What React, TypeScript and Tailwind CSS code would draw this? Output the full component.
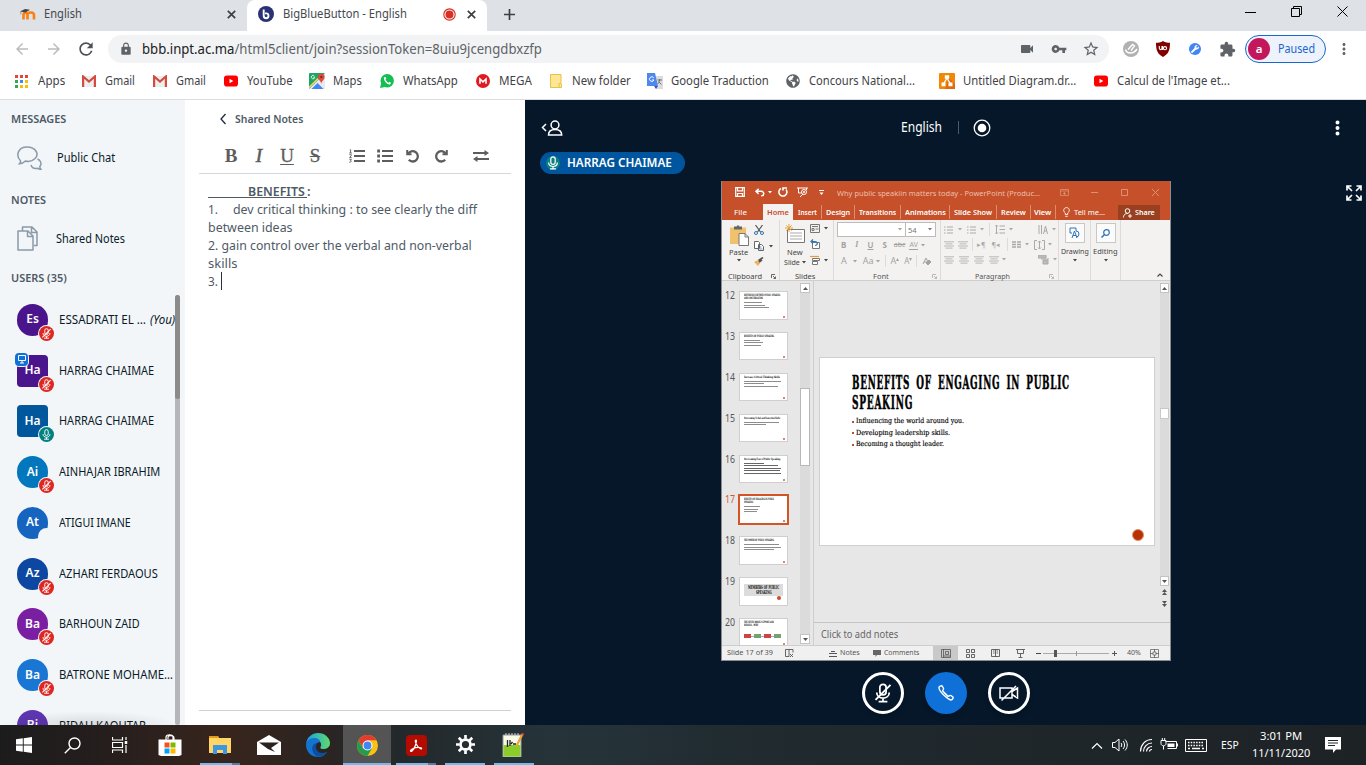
import React, { useLayoutEffect, useRef } from "react";
import clsx from "clsx";
import {
  MdArrowBack, MdArrowForward, MdRefresh, MdLock, MdVideocam, MdVpnKey, MdStarBorder,
  MdExtension, MdMoreVert,
} from "react-icons/md";
import { FaWrench, FaGlobeAmericas } from "react-icons/fa";

type Kids = { children?: React.ReactNode; className?: string };

/** Condenses or widens a single line of text so that it fills its box. */
function Fit({ children, className }: Kids) {
  const box = useRef<HTMLSpanElement>(null);
  const ink = useRef<HTMLSpanElement>(null);
  useLayoutEffect(() => {
    if (!box.current || !ink.current) return;
    const ratio = box.current.clientWidth / ink.current.offsetWidth;
    ink.current.style.transform = `scaleX(${ratio})`;
  });
  return (
    <span ref={box} className={clsx("block shrink-0 whitespace-pre", className)}>
      <span ref={ink} className="inline-block origin-left">{children}</span>
    </span>
  );
}

function Svg({ children, className, box = "0 0 16 16" }: Kids & { box?: string }) {
  return (
    <svg viewBox={box} className={clsx("shrink-0", className)} fill="none" stroke="currentColor">
      {children}
    </svg>
  );
}

/* ---------- Browser chrome ---------- */

const Cross = ({ className }: { className?: string }) => (
  <Svg className={clsx("h-[9px] w-[9px] text-[#3c4043]", className)} box="0 0 9 9"><path d="M.8.8l7.400 7.400M8.200.8L.8 8.200" strokeWidth="1.700" /></Svg>
);

function TabStrip() {
  return (
    <div className="flex h-[31px] bg-[#dee1e6] text-[12px] text-[#45494d]">
      <div className="flex h-[28px] w-[247px] items-center pl-[20px]">
        <Svg className="h-4 w-4" box="0 0 16 16">
          <path d="M3.500 13.500V9c0-3 4-3 4 0v4.500M7.500 13.500V9c0-3.400 6.500-3.400 6.500 0v4.500" stroke="#f98012" strokeWidth="2.6" />
          <path d="M0 5.500L5 3l5 .8-4.500 2.600z" fill="#444" stroke="none" />
          <path d="M.8 5.500v3" stroke="#777" strokeWidth=".7" />
        </Svg>
        <Fit className="ml-2 w-[38px]">English</Fit>
        <Cross className="ml-[145px]" />
      </div>
      <div className="flex h-[31px] w-[240px] items-center rounded-t-lg bg-white pb-[3px] pl-[11px]">
        <Svg className="h-4 w-4">
          <circle cx="8" cy="8" r="8" fill="#283274" stroke="none" />
          <path d="M5.700 3.500v6.300a2.400 2.400 0 1 0 2.400-2.400H7" stroke="#fff" strokeWidth="1.900" />
        </Svg>
        <Fit className="ml-[9px] w-[124px]">BigBlueButton - English</Fit>
        <Svg className="ml-[36px] h-[13px] w-[13px] text-[#d93025]">
          <circle cx="8" cy="8" r="7" strokeWidth="1.400" />
          <circle cx="8" cy="8" r="4.900" fill="currentColor" stroke="none" />
        </Svg>
        <Cross className="ml-[11px]" />
      </div>
      <Svg className="ml-[17px] mt-[9px] h-[11px] w-[11px] text-[#3c4043]" box="0 0 11 11"><path d="M5.500 0v11M0 5.500h11" strokeWidth="1.700" /></Svg>
      <div className="ml-auto mt-[5px] flex h-[13px] items-center gap-[35px] pr-[18px] text-black">
        <Svg className="h-[11px] w-[11px]" box="0 0 11 11"><path d="M0 6.500h11" /></Svg>
        <Svg className="h-[11px] w-[11px]" box="0 0 11 11"><path d="M.5 2.500h8v8h-8zM2.500 2.500v-2h8v8h-2" /></Svg>
        <Svg className="h-[11px] w-[11px]" box="0 0 11 11"><path d="M.5.500l10 10M10.500.5l-10 10" /></Svg>
      </div>
    </div>
  );
}

function AddressBar() {
  return (
    <div className="flex h-[36px] items-center bg-white text-[#5f6368]">
      <MdArrowBack className="ml-[13px] h-[18px] w-[18px] text-[#babcbe]" />
      <MdArrowForward className="ml-[14px] h-[18px] w-[18px] text-[#babcbe]" />
      <MdRefresh className="ml-[13px] h-5 w-5 text-[#4d5156]" />
      <div className="ml-[12px] flex h-7 w-[1001px] items-center rounded-full bg-[#f1f3f4]">
        <MdLock className="ml-[11px] h-[14px] w-[14px]" />
        <Fit className="ml-[9px] w-[400px] text-[13.500px]"><span className="text-[#202124]">bbb.inpt.ac.ma</span>/html5client/join?sessionToken=8uiu9jcengdbxzfp</Fit>
        <MdVideocam className="ml-auto h-4 w-4" />
        <MdVpnKey className="ml-4 h-4 w-4" />
        <MdStarBorder className="ml-[15px] mr-[9px] h-[18px] w-[18px]" />
      </div>
      <Svg className="ml-[14px] h-4 w-4">
        <circle cx="8" cy="8" r="8" fill="#b1b1b1" stroke="none" />
        <path d="M2.500 8.500c1 4.500 8 5 11.500-.5M5 8.500l4.500-5 2 1.500-3.500 4.500" stroke="#fff" strokeWidth="1.400" />
      </Svg>
      <Svg className="ml-4 h-4 w-4">
        <path d="M8 0c2.500 1.600 4.500 1.700 7 1.700C15 9 13.500 13 8 16 2.500 13 1 9 1 1.700 3.500 1.700 5.500 1.600 8 0z" fill="#800000" stroke="none" />
        <path d="M4.300 5v2.300c0 1.700 2.700 1.700 2.700 0V5M7.700 5v4" stroke="#fff" strokeWidth="1.100" />
        <circle cx="10" cy="7.200" r="1.600" stroke="#fff" strokeWidth="1.100" />
      </Svg>
      <span className="ml-[18px] flex h-3 w-3 items-center justify-center rounded-full bg-[#4285f4]">
        <FaWrench className="h-[8px] w-[8px] text-white" />
      </span>
      <MdExtension className="ml-[18px] h-[17px] w-[17px]" />
      <div className="ml-[9px] flex h-7 w-[81px] items-center rounded-full border border-[#1967d2] bg-[#edf2fb] pl-[2px]">
        <span className="flex h-[22px] w-[22px] items-center justify-center rounded-full bg-[#c2185b] text-[11.500px] font-semibold text-white">a</span>
        <Fit className="ml-[8px] w-[37px] text-[12.500px] text-[#1967d2]">Paused</Fit>
      </div>
      <MdMoreVert className="ml-[9px] h-[18px] w-[18px]" />
    </div>
  );
}

const YouTube = () => (
  <Svg className="h-[14px] w-[14px]" box="0 0 14 14">
    <rect x="0" y="1.500" width="14" height="11" rx="2.800" fill="#f00" stroke="none" />
    <path d="M5.500 4.700v4.600L9.300 7z" fill="#fff" stroke="none" />
  </Svg>
);
const Gmail = () => (
  <Svg className="h-[12px] w-[14px]" box="0 0 14 12">
    <path d="M0 1h14v11H0z" fill="#eceff1" stroke="none" />
    <path d="M1.100 12V1.500L7 6.500l5.900-5V12" stroke="#d54b3d" strokeWidth="2.200" />
  </Svg>
);

const bookmarks: { icon: React.ReactNode; label: string; at: string; w: string }[] = [
  {
    label: "Apps", at: "ml-[15px] gap-[10px]", w: "w-[27px]",
    icon: (
      <span className="grid grid-cols-3 gap-[2px]">
        {["bg-[#ea4335]", "bg-[#ea4335]", "bg-[#ea4335]", "bg-[#34a853]", "bg-[#4285f4]", "bg-[#fbbc05]", "bg-[#34a853]", "bg-[#fbbc05]", "bg-[#fbbc05]"].map((c, i) => (
          <i key={i} className={clsx("h-[3px] w-[3px]", c)} />
        ))}
      </span>
    ),
  },
  { label: "Gmail", at: "ml-[17px] gap-[9px]", w: "w-[30px]", icon: <Gmail /> },
  { label: "Gmail", at: "ml-[18px] gap-[9px]", w: "w-[30px]", icon: <Gmail /> },
  { label: "YouTube", at: "ml-[18px] gap-[9px]", w: "w-[46px]", icon: <YouTube /> },
  {
    label: "Maps", at: "ml-[16px] gap-[8px]", w: "w-[29px]",
    icon: (
      <Svg className="h-4 w-4">
        <rect width="16" height="16" rx="1" fill="#1fa463" stroke="none" />
        <path d="M0 16L16 0v16z" fill="#e8eaed" stroke="none" />
        <path d="M2.500 16L8.500 10l6 6z" fill="#4285f4" stroke="none" />
        <path d="M0 14.500L9 5.500" stroke="#fdd663" strokeWidth="1.400" />
        <path d="M5.500 3.300A1.700 1.700 0 1 0 5.700 4.300H4.200" stroke="#fff" strokeWidth=".8" />
        <path d="M12.300 11c0-3-3.300-4-3.300-7a3.300 3.300 0 0 1 6.600 0c0 3-3.300 4-3.300 7z" fill="#dd4b3e" stroke="none" />
        <circle cx="12.300" cy="4" r="1.100" fill="#7b1f17" stroke="none" />
      </Svg>
    ),
  },
  {
    label: "WhatsApp", at: "ml-[18px] gap-[9px]", w: "w-[55px]",
    icon: (
      <Svg className="h-[14px] w-[14px]" box="0 0 14 14">
        <circle cx="7.200" cy="6.800" r="6.700" fill="#12bf50" stroke="none" />
        <path d="M0 14l1.200-5L5 13z" fill="#12bf50" stroke="none" />
        <path d="M4.700 4c-.5 2.500 3 6 5.300 5.700" stroke="#fff" strokeWidth="1.500" />
        <path d="M4.500 3.200l1.100 1.800M8.800 8.700l1.700.9" stroke="#fff" strokeWidth="2" />
      </Svg>
    ),
  },
  {
    label: "MEGA", at: "ml-[18px] gap-[9px]", w: "w-[33px]",
    icon: (
      <Svg className="h-[14px] w-[14px]" box="0 0 14 14">
        <circle cx="7" cy="7" r="7" fill="#e01a22" stroke="none" />
        <path d="M4 9.800V5l3 2.800L10 5v4.800" stroke="#fff" strokeWidth="1.600" />
      </Svg>
    ),
  },
  {
    label: "New folder", at: "ml-[18px] gap-[10px]", w: "w-[59px]",
    icon: (
      <Svg className="h-[14px] w-[12px]" box="0 0 12 14">
        <path d="M.5.500h10.500v9l.5.500v3.500H.500z" fill="#ffe692" stroke="#e3c24f" />
        <path d="M9 13v-3.500h2" stroke="#e3c24f" />
      </Svg>
    ),
  },
  {
    label: "Google Traduction", at: "ml-[16px] gap-[8px]", w: "w-[98px]",
    icon: (
      <Svg className="h-4 w-4">
        <path d="M6 3h10v13H9z" fill="#dadce0" stroke="none" />
        <path d="M0 0h8l3 13H0z" fill="#4e88ef" stroke="none" />
        <path d="M7 13h4l-2 3z" fill="#3556b8" stroke="none" />
        <path d="M6.800 4.800A2.300 2.300 0 1 0 7 7H5" stroke="#fff" />
        <path d="M10.500 7h4.500M12.700 6v1c-.3 2-1 3-2 4M11.500 8.500l3 3" stroke="#6b7378" />
      </Svg>
    ),
  },
  { label: "Concours National...", at: "ml-[17px] gap-[9px]", w: "w-[106px]", icon: <FaGlobeAmericas className="h-[14px] w-[14px] text-[#5f6368]" /> },
  {
    label: "Untitled Diagram.dr...", at: "ml-[24px] gap-[8px]", w: "w-[113px]",
    icon: (
      <Svg className="h-4 w-4">
        <rect width="16" height="16" rx="1" fill="#f08705" stroke="none" />
        <path d="M10 5l6 6v5H6z" fill="#df6c0c" stroke="none" />
        <path d="M8 5L4.500 11M8 5l3.500 6" stroke="#fff" strokeWidth="1.300" />
        <path d="M5.800 2.300h4.400v3.400H5.800zM2.500 9.500h4v3.700h-4zM9.500 9.500h4v3.700h-4z" fill="#fff" stroke="none" />
      </Svg>
    ),
  },
  { label: "Calcul de l'Image et...", at: "ml-[18px] gap-[9px]", w: "w-[113px]", icon: <YouTube /> },
];

function Bookmarks() {
  return (
    <div className="flex h-[33px] items-center border-b border-[#dadce0] bg-white pb-[4px] text-[12px] text-[#3f4347]">
      {bookmarks.map((b, i) => (
        <div key={i} className={clsx("flex shrink-0 items-center", b.at)}>
          {b.icon}
          <Fit className={b.w}>{b.label}</Fit>
        </div>
      ))}
    </div>
  );
}

/* ---------- User list ---------- */

const Mic = ({ className, off }: { className?: string; off?: boolean }) => (
  <Svg className={className}>
    <rect x="5.500" y="1" width="5" height="8.500" rx="2.500" strokeWidth="1.400" />
    <path d="M3 7.500c0 6 10 6 10 0M8 12v2.800M4.500 14.800h7" strokeWidth="1.400" />
    {off && <path d="M2 13.500L14 1.500" strokeWidth="1.500" />}
  </Svg>
);

type Badge = "muted" | "live" | "none";
const users: { tag: string; name: string; w: string; bg: string; badge: Badge; square?: boolean; you?: boolean; presenter?: boolean }[] = [
  { tag: "Es", name: "ESSADRATI EL …", w: "w-[87px]", bg: "bg-[#4a148c]", badge: "muted", you: true },
  { tag: "Ha", name: "HARRAG CHAIMAE", w: "w-[95px]", bg: "bg-[#4a148c]", badge: "muted", square: true, presenter: true },
  { tag: "Ha", name: "HARRAG CHAIMAE", w: "w-[95px]", bg: "bg-[#01579b]", badge: "live", square: true },
  { tag: "Ai", name: "AINHAJAR IBRAHIM", w: "w-[101px]", bg: "bg-[#0277bd]", badge: "muted" },
  { tag: "At", name: "ATIGUI IMANE", w: "w-[72px]", bg: "bg-[#1565c0]", badge: "none" },
  { tag: "Az", name: "AZHARI FERDAOUS", w: "w-[99px]", bg: "bg-[#0d47a1]", badge: "muted" },
  { tag: "Ba", name: "BARHOUN ZAID", w: "w-[81px]", bg: "bg-[#7b1fa2]", badge: "muted" },
  { tag: "Ba", name: "BATRONE MOHAME…", w: "w-[114px]", bg: "bg-[#1976d2]", badge: "muted" },
  { tag: "Bi", name: "BIDAH KAOUTAR", w: "w-[87px]", bg: "bg-[#5e35b1]", badge: "muted" },
];

function Sidebar() {
  return (
    <aside className="relative flex w-[185px] shrink-0 flex-col overflow-hidden bg-[#f3f6f9] text-[12px] text-[#0b1a28]">
      <div className="flex h-[38px] items-center pl-[11px] text-[11.500px] font-semibold text-[#4e5a66]"><Fit className="w-[55px]">MESSAGES</Fit></div>
      <div className="flex h-[40px] items-center pl-[17px]">
        <Svg className="h-[25px] w-[25px] text-[#8b9aa8]" box="0 0 25 25">
          <path d="M3.300 14.500C-1.500 9.500 1 1 10 1s12.500 7.500 8 11.500c-3 3-7 3.300-9.500 2.500-1.500 1.500-3.500 2.500-6 2.700 1-1 1.300-2 .8-3.200z" strokeWidth="1.500" />
          <path d="M20.500 13c3.500 1.500 4.500 5 2.300 7.500 0 1 .5 2 1.200 2.700-1.300.2-2.500-.2-3.500-1-2.500.6-5.500-.2-6.500-3.200" strokeWidth="1.500" />
        </Svg>
        <Fit className="ml-[15px] w-[58px]">Public Chat</Fit>
      </div>
      <div className="mt-[2px] flex h-[40px] items-center pl-[11px] text-[11.500px] font-semibold text-[#4e5a66]"><Fit className="w-[35px]">NOTES</Fit></div>
      <div className="flex h-[37px] items-center pl-[17px]">
        <Svg className="h-[25px] w-[21px] text-[#8b9aa8]" box="0 0 21 25">
          <path d="M1 5h10l5 5v14H1zM10.500 5v5.500H16M5.500 4.500V1H15l5 5v13.500h-3M14.500 1v5.500H20" strokeWidth="1.500" strokeLinejoin="round" />
        </Svg>
        <Fit className="ml-[18px] w-[69px]">Shared Notes</Fit>
      </div>
      <div className="flex h-[37px] items-center pl-[11px] pt-[5px] text-[11.500px] font-semibold text-[#4e5a66]"><Fit className="w-[56px]">USERS (35)</Fit></div>
      <div className="flex flex-1 overflow-hidden">
        <div className="flex w-[175px] shrink-0 flex-col pt-[.5px]">
          {users.map((u, i) => (
            <div key={i} className="flex h-[50.750px] shrink-0 items-center pl-[17px]">
              <div className={clsx("relative flex h-8 w-[31px] shrink-0 items-center justify-center pb-px text-[12px] font-semibold text-white", u.bg, u.square ? "rounded-[4px]" : "rounded-full")}>
                {u.tag}
                <span className={clsx("absolute -bottom-[5px] -right-[6px] flex h-[15px] w-[15px] items-center justify-center rounded-full ring-1 ring-[#f3f6f9]",
                  u.badge === "muted" && "bg-[#df2721]", u.badge === "live" && "bg-[#008081]", u.badge === "none" && "bg-[#f3f6f9]")}>
                  {u.badge !== "none" && <Mic className="h-[11px] w-[11px]" off={u.badge === "muted"} />}
                </span>
                {u.presenter && (
                  <span className="absolute -left-[2px] -top-[2px] flex h-[13px] w-[13px] items-center justify-center rounded-[4px] bg-[#0f70d7] ring-1 ring-[#f3f6f9]">
                    <Svg className="h-[10px] w-[10px]" box="0 0 10 10"><path d="M1.500 1.500h7v5h-7zM3 9h4M5 7v2" /></Svg>
                  </span>
                )}
              </div>
              <Fit className={clsx("ml-[11px]", u.w)}>{u.name}</Fit>
              {u.you && <Fit className="ml-[4px] w-[25px] italic">(You)</Fit>}
            </div>
          ))}
        </div>
        <div className="mt-px w-[5px] rounded-full bg-[#b5b6b9]"><div className="h-[104px] rounded-full bg-[#8b8b8b]" /></div>
      </div>
      <div className="absolute bottom-0 left-0 h-[14px] w-[180px] bg-radial-[ellipse_at_bottom] from-black/12 to-transparent to-70%" />
    </aside>
  );
}

/* ---------- Shared notes ---------- */

function Notes() {
  return (
    <section className="flex w-[340px] shrink-0 flex-col bg-white px-[14px] text-[13px] text-[#4e5a66]">
      <div className="flex h-[38px] items-center pl-[21px]">
        <Svg className="h-3 w-[7px] text-[#1b2a3a]" box="0 0 7 12"><path d="M5.500 1L1 6l4.500 5" strokeWidth="1.300" /></Svg>
        <Fit className="ml-[8px] w-[68px] text-[11.500px] font-semibold">Shared Notes</Fit>
      </div>
      <div className="flex h-[36px] items-center border-b border-[#d2d8de] pl-[18px] text-[#5d5d5d]">
        <div className="flex pt-[1px] font-['Liberation_Serif'] text-[19px]">
          <span className="w-7 text-center font-bold">B</span>
          <span className="w-7 text-center italic [-webkit-text-stroke:.6px_#5d5d5d]">I</span>
          <span className="w-7 text-center underline decoration-1 underline-offset-2 [-webkit-text-stroke:.3px_#5d5d5d]">U</span>
          <span className="w-7 text-center line-through decoration-1 [-webkit-text-stroke:.3px_#5d5d5d]">S</span>
        </div>
        <Svg className="ml-[20px] h-[14px] w-4" box="0 0 16 14">
          <path d="M5 2h11M5 7h11M5 12h11" strokeWidth="2.100" />
          <path d="M.8.700h.8V4M.3 4h2.500M.4 5.700h1.900v.9L.5 8.600h2.200M.4 10.300h2L1.500 11.500c1.500 0 1 2-1.200 1.600" strokeWidth=".9" />
        </Svg>
        <Svg className="ml-3 h-[14px] w-4" box="0 0 16 14">
          <path d="M5 2h11M5 7h11M5 12h11" strokeWidth="2.100" /><path d="M.2 2h2.800M.2 7h2.800M.2 12h2.800" strokeWidth="2.800" />
        </Svg>
        <Svg className="ml-[13px] h-[14px] w-[14px]" box="0 0 14 14"><path d="M1.200 1v4.200H5.500" strokeWidth="2" /><path d="M2 5a5.200 5.200 0 1 1 .8 5.800" strokeWidth="2.300" /></Svg>
        <Svg className="ml-[14px] h-[14px] w-[14px]" box="0 0 14 14"><path d="M12.800 1v4.200H8.500" strokeWidth="2" /><path d="M12 5a5.200 5.200 0 1 0-.8 5.800" strokeWidth="2.300" /></Svg>
        <Svg className="ml-[25px] h-[12px] w-4" box="0 0 16 12"><path d="M0 3h13M16 9H3" strokeWidth="1.800" /><path d="M11.500 0v6L16 3zM4.500 6v6L0 9z" fill="currentColor" stroke="none" /></Svg>
      </div>
      <div className="flex flex-1 flex-col pl-[9px] pt-[8px] leading-[18px]">
        <div className="flex h-[18px]"><div className="flex h-[16px] border-b border-[#4e5a66] pl-10"><Fit className="w-[57px] font-semibold">BENEFITS</Fit><i className="w-[2px]" /></div><span className="font-semibold">:</span></div>
        <div className="flex h-[18px]"><Fit className="w-[10px]">1.</Fit><Fit className="ml-[15px] w-[244px]">dev critical thinking : to see clearly the diff</Fit></div>
        <Fit className="h-[18px] w-[85px]">between ideas</Fit>
        <Fit className="h-[18px] w-[264px]">2. gain control over the verbal and non-verbal</Fit>
        <Fit className="h-[18px] w-[29px]">skills</Fit>
        <div className="flex h-[18px]"><Fit className="w-[10px]">3.</Fit><i className="ml-[3px] h-[18px] w-px bg-[#28323c]" /></div>
      </div>
      <div className="mb-[14px] h-px bg-[#ccd2d8]" />
    </section>
  );
}

/* ---------- Shared presentation window ---------- */

const Caret = ({ className }: { className?: string }) => (
  <Svg className={clsx("h-[3px] w-[4px]", className)} box="0 0 4 3"><path d="M0 0h4L2 2.600z" fill="currentColor" stroke="none" /></Svg>
);

const pptTabs: [string, string, string][] = [
  ["Insert", "w-[29px] pl-[5px]", "w-[19px]"],
  ["Design", "w-[33px] pl-[4px]", "w-[24px]"],
  ["Transitions", "w-[46px] pl-[4px]", "w-[37px]"],
  ["Animations", "w-[49px] pl-[4px]", "w-[41px]"],
  ["Slide Show", "w-[47px] pl-[4px]", "w-[38px]"],
  ["Review", "w-[34px] pl-[4px]", "w-[25px]"],
  ["View", "w-[25px] pl-[3px]", "w-[17px]"],
];

function PptHeader() {
  return (
    <div className="flex h-[39px] flex-col bg-[#c5502a] text-white">
      <div className="flex h-[23px] items-center pb-px text-[7.500px]">
        <Svg className="ml-[13px] h-[10px] w-[10px]" box="0 0 10 10"><path d="M.7.700h8.600v8.600H.700zM2.500 1v2.800h5V1M2.500 9V6.500h5V9" strokeWidth="1.200" /></Svg>
        <Svg className="ml-[10px] h-[9px] w-[10px]" box="0 0 11 9"><path d="M4 .5L1 3.200 4 6M1.200 3.200h5.500c4 0 4 5 0 5" strokeWidth="1.600" /></Svg>
        <Caret className="ml-[3px]" />
        <Svg className="ml-[6px] h-[10px] w-[10px]" box="0 0 10 10"><path d="M3 1.500a4 4 0 1 0 5 1M5 3.500V1h4" strokeWidth="1.600" /></Svg>
        <Svg className="ml-[9px] h-[11px] w-[11px]" box="0 0 11 11"><path d="M0 1h11M1.500 1v5h3M9.500 1v2M3 10l3-3" /><circle cx="7" cy="5" r="2.500" /><circle cx="7" cy="5" r=".7" /></Svg>
        <Svg className="ml-[11px] h-[5px] w-[5px]" box="0 0 5 5"><path d="M0 .5h5" /><path d="M.5 2.500h4L2.500 5z" fill="currentColor" stroke="none" /></Svg>
        <Fit className="ml-[13px] mt-[4px] w-[203px] text-[#eebfab]">Why public speakiin matters today - PowerPoint (Produc...</Fit>
        <Svg className="ml-[20px] h-[7px] w-[9px] text-[#dd9076]" box="0 0 9 7"><path d="M.5.500h8v6h-8zM.5 2h8M4.500 3v3M3 4.500h3" strokeWidth=".8" /></Svg>
        <Svg className="ml-[22px] h-[7px] w-[7px] text-[#dd9076]" box="0 0 7 7"><path d="M0 3.500h7" /></Svg>
        <Svg className="ml-[23px] h-[7px] w-[7px] text-[#dd9076]" box="0 0 7 7"><path d="M.5.500h6v6h-6z" /></Svg>
        <Svg className="ml-[24px] h-[7px] w-[7px] text-[#dd9076]" box="0 0 7 7"><path d="M0 0l7 7M7 0L0 7" /></Svg>
      </div>
      <div className="flex h-[16px] items-center text-[7.500px]">
        <Fit className="ml-[12px] w-[13px] pt-px">File</Fit>
        <div className="ml-[16px] flex h-[16px] w-[30px] items-center bg-[#f3f2f1] pl-[4px] pt-px text-[#c5502a]"><Fit className="w-[22px] font-semibold">Home</Fit></div>
        {pptTabs.map(([label, cell, w]) => (
          <div key={label} className={clsx("flex h-[14px] items-center border-r border-[#d98d72] pt-px", cell)}>
            <Fit className={clsx("font-semibold", w)}>{label}</Fit>
          </div>
        ))}
        <Svg className="ml-[7px] h-[10px] w-[7px]" box="0 0 7 10"><path d="M2.300 7.500V6C-.5 4 .8.600 3.500.600S7.500 4 4.700 6v1.500zM2.300 9.300h2.400" strokeWidth=".9" /></Svg>
        <Fit className="ml-[4px] w-[31px] pt-px">Tell me...</Fit>
        <div className="ml-[13px] flex h-[15px] w-[42px] items-center bg-[#98401f] pl-[5px] pt-px">
          <Svg className="h-[10px] w-[9px]" box="0 0 9 10"><circle cx="4.500" cy="3" r="2.300" /><path d="M.5 9.500C.5 6 3 5.500 5 5.500M5 8h4M7 6v4" /></Svg>
          <Fit className="ml-[3px] w-[20px] font-semibold">Share</Fit>
        </div>
      </div>
    </div>
  );
}

const Lines = ({ className }: { className?: string }) => (
  <Svg className={clsx("h-[8px] w-[10px]", className)} box="0 0 10 8"><path d="M0 .8h10M1.500 2.900h7M0 5h10M1.500 7.100h7" strokeWidth=".8" /></Svg>
);
const Bullets = () => (
  <Svg className="h-[8px] w-[9px]" box="0 0 9 8"><path d="M0 1h1.500M3 1h6M0 4h1.500M3 4h6M0 7h1.500M3 7h6" /></Svg>
);
const Launcher = () => (
  <Svg className="h-[5px] w-[5px]" box="0 0 5 5"><path d="M.5 4V.5H4M2 2l2.500 2.500M4.500 2.500v2h-2" strokeWidth=".8" /></Svg>
);

function Ribbon() {
  return (
    <div className="flex h-[61px] border-b border-[#d0cecd] bg-[#f3f2f1] text-[7.500px] leading-[10px] text-[#444]">
      <div className="flex w-[58px] flex-col border-r border-[#dcdbda] pl-[6px]">
        <div className="flex h-[51px] shrink-0 pt-[5px]">
          <div className="flex w-[21px] flex-col items-center">
            <Svg className="h-[21px] w-[20px]" box="0 0 20 21">
              <path d="M1 2.500h16V19H1z" fill="#f0c26c" stroke="none" /><path d="M5 4.500v-3h2.500L9 0l1.500 1.500H13v3z" fill="#666" stroke="none" />
              <path d="M10 8.500h6l3.500 3.500v8.500H10z" fill="#fff" stroke="#777" /><path d="M16 8.500V12h3.500" stroke="#777" />
            </Svg>
            <Fit className="mt-[1px] w-[19px]">Paste</Fit>
            <Caret className="mt-[2px]" />
          </div>
          <div className="ml-[5px] flex flex-col gap-[6px]">
            <Svg className="h-[10px] w-[10px]" box="0 0 10 10"><path d="M1.500 0l5 7M8.500 0l-5 7" stroke="#555" strokeWidth="1.200" /><circle cx="2" cy="8" r="1.500" stroke="#2e74b5" /><circle cx="8" cy="8" r="1.500" stroke="#2e74b5" /></Svg>
            <div className="flex items-center gap-[5px]"><Svg className="h-[10px] w-[10px]" box="0 0 10 10"><path d="M.5.500h4l1 1v6h-5zM4.500 3.500h3l2 2v4h-5z" fill="#fff" stroke="#666" /><path d="M5.500 6h2M5.500 8h3" stroke="#2e74b5" strokeWidth=".7" /></Svg><Caret /></div>
            <Svg className="h-[9px] w-[10px]" box="0 0 10 9"><path d="M0 5l4-2 2.500 2.500L4 9z" fill="#eab35c" stroke="none" /><path d="M4.500 3.500L9 .5M5 5l3-2" stroke="#555" strokeWidth="1.600" /></Svg>
          </div>
        </div>
        <div className="flex items-center"><Fit className="w-[34px]">Clipboard</Fit><span className="ml-[9px]"><Launcher /></span></div>
      </div>
      <div className="flex w-[54px] flex-col border-r border-[#dcdbda] pl-[3px]">
        <div className="flex h-[51px] shrink-0 pt-[4px]">
          <div className="flex w-[24px] flex-col items-center">
            <Svg className="h-[20px] w-[20px]" box="0 0 20 20"><path d="M2.500 5.500h17v13h-17z" fill="#fff" stroke="#777" /><path d="M5 9h12M5 12h12M5 15h12" stroke="#aaa" /><path d="M4 0v8M0 4h8M1.300 1.300l5.400 5.400M6.700 1.300L1.300 6.700" stroke="#eaa33c" strokeWidth="1" /></Svg>
            <Fit className="mt-[3px] w-[16px]">New</Fit>
            <div className="flex items-center gap-[2px]"><Fit className="w-[16px]">Slide</Fit><Caret /></div>
          </div>
          <div className="ml-[3px] flex flex-col gap-[6px]">
            <div className="flex items-center gap-[4px]"><Svg className="h-[9px] w-[10px]" box="0 0 10 9"><path d="M.5.500h9v8h-9zM2 2.500h6M2 4.500h2v2H2zM5.500 5h3" stroke="#777" /></Svg><Caret /></div>
            <Svg className="h-[10px] w-[10px]" box="0 0 10 10"><path d="M2.500 3.500h7v6h-7z" fill="#fff" stroke="#777" /><path d="M1 2.500h4c3 0 3 4 0 4M3 .5L1 2.500l2 2" stroke="#2e74b5" strokeWidth="1.200" /></Svg>
            <div className="flex items-center gap-[4px]"><Svg className="h-[10px] w-[10px]" box="0 0 10 10"><path d="M2.500 3.500h7v2h-7zM2.500 6.500h5v3h-5z" fill="#fff" stroke="#777" /><path d="M0 1.500h9" stroke="#e59c3c" strokeWidth="1.200" /></Svg><Caret /></div>
          </div>
        </div>
        <Fit className="ml-[12px] w-[20px]">Slides</Fit>
      </div>
      <div className="flex w-[107px] flex-col border-r border-[#dcdbda] pl-[3px] text-[#a3a2a1]">
        <div className="mt-[2px] flex h-[15px] shrink-0">
          <div className="flex w-[69px] items-center justify-end border border-[#bdbcbb] bg-white pr-[3px]"><Caret /></div>
          <div className="flex w-[30px] items-center justify-between border border-l-0 border-[#bdbcbb] bg-white pl-[2px] pr-[3px] text-[#777]"><Fit className="w-[9px]">54</Fit><Caret /></div>
        </div>
        <div className="mt-[3px] flex h-[10px] shrink-0 items-center gap-[9px] pl-[4px] text-[8px]">
          <b>B</b><i className="font-['Liberation_Serif'] font-bold">I</i><u className="font-semibold">U</u><b>S</b><s className="-ml-[2px] text-[7px]">abc</s><span className="-ml-[5px] border-b border-[#a3a2a1] text-[7px] leading-[8px]">AV</span><Caret className="-ml-[6px]" />
        </div>
        <div className="mt-[5px] flex h-[12px] shrink-0 items-center pl-[4px] text-[9px]">
          <span>A</span><Caret className="ml-[6px]" /><span className="ml-[6px]">Aa</span><Caret className="ml-[2px]" /><i className="ml-[5px] h-3 w-px bg-[#dcdbda]" />
          <span className="ml-[5px]">A</span><Svg className="mb-1 h-[3px] w-[3px]" box="0 0 3 3"><path d="M0 3h3L1.500 0z" fill="currentColor" stroke="none" /></Svg>
          <span className="ml-[5px] text-[8px]">A</span><Svg className="mb-1 h-[3px] w-[3px]" box="0 0 3 3"><path d="M0 0h3L1.500 3z" fill="currentColor" stroke="none" /></Svg>
          <i className="ml-[4px] h-3 w-px bg-[#dcdbda]" />
          <Svg className="ml-[5px] h-[8px] w-[9px]" box="0 0 9 8"><path d="M1 7l3-6 2 4M2 5h3" /><path d="M4 6l3-3 2 2-3 3z" fill="currentColor" /></Svg>
        </div>
        <div className="mt-[4px] flex items-center text-[#555]"><Fit className="ml-[36px] w-[16px]">Font</Fit><span className="ml-auto mr-[3px] text-[#aaa]"><Launcher /></span></div>
      </div>
      <div className="flex w-[118px] flex-col border-r border-[#dcdbda] pl-[3px] text-[#aaa9a8]">
        <div className="flex h-[51px] shrink-0 flex-col gap-[6px] pt-[5px]">
          <div className="flex h-[9px] items-center"><Bullets /><Caret className="ml-[5px]" /><span className="ml-[5px]"><Bullets /></span><Caret className="ml-[4px]" /><i className="ml-[5px] h-[13px] w-px bg-[#dcdbda]" /><Svg className="ml-[5px] h-[9px] w-[10px]" box="0 0 10 9"><path d="M1.500 0v9M0 1.500L1.500 0 3 1.500M0 7.500L1.500 9 3 7.500M4.500 1H10M4.500 4.500H10M4.500 8H10" /></Svg><Caret className="ml-[4px]" /><Svg className="ml-[25px] h-[9px] w-[10px]" box="0 0 10 9"><path d="M1 0v9M3.500 0v9M5.500 9L7.500 1l2 8M6 6h3" /></Svg><Caret className="ml-[4px]" /></div>
          <div className="flex h-[9px] items-center gap-[4px]"><Lines /><Lines /><i className="h-[13px] w-px bg-[#dcdbda]" /><span className="text-[7px]">▸¶</span><span className="ml-[2px] text-[7px]">¶◂</span><i className="ml-[3px] h-[13px] w-px bg-[#dcdbda]" /><Svg className="h-[7px] w-[9px]" box="0 0 9 7"><path d="M0 1h4M5 1h4M0 3.500h4M5 3.500h4M0 6h4M5 6h4" strokeWidth="1.300" /></Svg><Caret /><Svg className="ml-[1px] h-[10px] w-[11px]" box="0 0 11 10"><path d="M3 .5H.5v9H3M8 .5h2.500v9H8M5.500 1v8M4 2.500L5.500 1 7 2.500M4 7.500L5.500 9 7 7.500" /></Svg><Caret className="-ml-[1px]" /></div>
          <div className="flex h-[9px] items-center"><Lines /><Lines className="ml-[5px]" /><Lines className="ml-[5px]" /><Lines className="ml-[5px]" /><Caret className="ml-[3px]" /><Svg className="ml-[32px] h-[10px] w-[11px]" box="0 0 11 10"><path d="M0 0h8v3H0zM3 4h8M5 5h5v4H5z" fill="#bbb" /></Svg><Caret className="ml-[4px]" /></div>
        </div>
        <div className="flex items-center text-[#555]"><Fit className="ml-[31px] w-[35px]">Paragraph</Fit><span className="ml-auto mr-[4px] text-[#aaa]"><Launcher /></span></div>
      </div>
      <div className="flex w-[32px] flex-col items-center border-r border-[#dcdbda] pt-[3px]">
        <div className="flex h-[20px] w-[20px] items-center justify-center border border-[#c9c8c7] bg-[#fbfbfb]"><Svg className="h-[12px] w-[12px]" box="0 0 12 12"><path d="M1 1h6v3M1 1v5h2M7 4a3 3 0 1 1 0 6M3 11l2.500-7L8 11M4 8.500h3" stroke="#2e74b5" /></Svg></div>
        <Fit className="mt-[3px] w-[28px]">Drawing</Fit><Caret className="mt-[3px]" />
      </div>
      <div className="flex w-[30px] flex-col items-center border-r border-[#dcdbda] pt-[3px]">
        <div className="flex h-[20px] w-[20px] items-center justify-center border border-[#c9c8c7] bg-[#fbfbfb]"><Svg className="h-[9px] w-[9px]" box="0 0 9 9"><circle cx="5.500" cy="3.500" r="2.800" stroke="#2e74b5" strokeWidth="1.200" /><path d="M3.500 5.500L.5 8.500" stroke="#2e74b5" strokeWidth="1.500" /></Svg></div>
        <Fit className="mt-[3px] w-[25px]">Editing</Fit><Caret className="mt-[3px]" />
      </div>
      <div className="flex flex-1 items-end justify-end pb-[3px] pr-[7px]"><Svg className="h-[4px] w-[6px]" box="0 0 6 4"><path d="M.5 3.500L3 1l2.500 2.500" strokeWidth="1.200" /></Svg></div>
    </div>
  );
}

const thumbs: { n: number; title: string[]; lines: string[] }[] = [
  { n: 12, title: ["DIFFERENCES BETWEEN PUBLIC SPEAKING", "AND CONVERSATION"], lines: ["w-[18px]", "w-[21px]", "w-[25px]"] },
  { n: 13, title: ["BENEFITS OF PUBLIC SPEAKING"], lines: ["w-[16px]", "w-[19px]", "w-[17px]"] },
  { n: 14, title: ["Increase Critical Thinking Skills"], lines: ["w-[37px]", "w-[20px]", "w-[34px]"] },
  { n: 15, title: ["Overcoming Verbal and Nonverbal Skills"], lines: ["w-[35px]", "w-[22px]"] },
  { n: 16, title: ["Overcoming Fear of Public Speaking"], lines: ["w-[20px]", "w-[34px]", "w-[37px]", "w-[36px]", "w-[37px]"] },
  { n: 17, title: ["BENEFITS OF ENGAGING IN PUBLIC", "SPEAKING"], lines: ["w-[16px]", "w-[14px]", "w-[13px]"] },
  { n: 18, title: ["THE POWER OF PUBLIC SPEAKING"], lines: ["w-[35px]", "w-[37px]", "w-[30px]"] },
  { n: 19, title: [], lines: [] },
  { n: 20, title: ["THE SEVEN MODEL SUPPORT AND", "DESIGN - WHY"], lines: [] },
];

function titleWidth(line: string, row: number) {
  if (row === 0) return line.length > 32 ? "w-[36px]" : "w-[30px]";
  return line.length > 14 ? "w-[19px]" : line.length > 10 ? "w-[14px]" : "w-[9px]";
}

function Thumbs() {
  return (
    <div className="flex h-[364px] w-[78px] flex-col overflow-hidden pt-[8px]">
      {thumbs.map((t) => (
        <div key={t.n} className="flex h-[40.900px] shrink-0 pl-[3px] text-[#555]">
          <Fit className={clsx("w-[10px] text-[10.500px] leading-[12px]", t.n === 17 && "text-[#d0592f]")}>{t.n}</Fit>
          <div className={clsx("ml-[4px] mt-[2px] flex h-[28.500px] w-[49px] shrink-0 flex-col border bg-white pl-[4px] pt-[2px]", t.n === 17 ? "border-[#d35526] outline-1 outline-[#d35526]" : "border-[#cfcfcf]")}>
            {t.title.map((line, i) => (
              <Fit key={line} className={clsx("h-[3px] font-['DejaVu_Serif'] text-[3px] font-bold leading-[3px] text-black", titleWidth(line, i))}>{line}</Fit>
            ))}
            <div className="mt-[2px] flex flex-col gap-[1.500px]">
              {t.lines.map((w, i) => <i key={i} className={clsx("h-px", w, t.n === 16 ? "bg-[#666]" : "bg-[#8d8d8d]")} />)}
            </div>
            {t.n === 19 && (
              <div className="mt-[2px] flex h-[12px] w-[39px] flex-col items-center bg-[#dcdcdc] pt-px font-['DejaVu_Serif'] text-[5px] font-bold leading-[5px] text-black">
                <Fit className="w-[31px]">MEMBERS OF PUBLIC</Fit><Fit className="w-[16px]">SPEAKING</Fit>
              </div>
            )}
            {t.n === 19 && <i className="ml-[33px] h-1 w-1 shrink-0 rounded-full bg-[#c4512b]" />}
            {t.n === 20 && (
              <div className="mt-[5px] flex items-center">
                <i className="h-[4px] w-[7px] bg-[#ce4343]" /><i className="h-px w-[3px] bg-[#aaa]" /><i className="h-[4px] w-[7px] bg-[#74a172]" /><i className="h-px w-[3px] bg-[#aaa]" /><i className="h-[4px] w-[7px] bg-[#ce4343]" /><i className="h-px w-[3px] bg-[#aaa]" /><i className="h-[4px] w-[7px] bg-[#74a172]" />
              </div>
            )}
            {t.n !== 19 && <i className="mb-[1px] ml-[39px] mt-auto h-[2px] w-[1.500px] shrink-0 bg-[#d98a6c]" />}
          </div>
        </div>
      ))}
    </div>
  );
}

const Step = ({ up }: { up?: boolean }) => (
  <span className="flex h-[10px] shrink-0 items-center justify-center border border-[#c4c3c2] bg-white text-[#555]">
    <Svg className="h-[3px] w-[5px]" box="0 0 5 3"><path d={up ? "M0 3h5L2.500 0z" : "M0 0h5L2.500 3z"} fill="currentColor" stroke="none" /></Svg>
  </span>
);

const bulletsText = [
  ["Influencing the world around you.", "w-[108px]"],
  ["Developing leadership skills.", "w-[94px]"],
  ["Becoming a thought leader.", "w-[88px]"],
] as const;

function PptBody() {
  return (
    <div className="flex h-[364px] bg-[#e8e7e8]">
      <Thumbs />
      <div className="mb-px mt-[2px] flex w-[10px] flex-col bg-[#dcdbdc]">
        <Step up />
        <div className="mt-[95px] h-[78px] border border-[#b9b8b8] bg-white" />
        <div className="flex-1" />
        <Step />
      </div>
      <div className="ml-[3px] flex flex-1 flex-col border-l border-[#cfcecf]">
        <div className="flex h-[341px]">
          <div className="flex w-[346px] flex-col pl-[5px] pt-[76px]">
            <div className="flex h-[189px] w-[336px] flex-col border border-[#cfcfcf] bg-white pl-[32px] pt-[14px] text-black">
              <Fit className="h-[20px] w-[218px] font-['DejaVu_Serif'] text-[18.500px] font-bold leading-[21px] tracking-[1.500px] [-webkit-text-stroke:.5px_#000] [word-spacing:5px]">BENEFITS OF ENGAGING IN PUBLIC</Fit>
              <Fit className="h-[20px] w-[61px] font-['DejaVu_Serif'] text-[18.500px] font-bold leading-[21px] tracking-[1.500px] [-webkit-text-stroke:.5px_#000]">SPEAKING</Fit>
              <div className="mt-[4px] flex flex-col font-['DejaVu_Serif'] text-[7px] leading-[11.700px]">
                {bulletsText.map(([text, w]) => (
                  <div key={text} className="flex h-[11.600px] items-center"><i className="h-[2px] w-[2px] bg-[#b3532f]" /><Fit className={clsx("ml-[2px] [-webkit-text-stroke:.15px_#000]", w)}>{text}</Fit></div>
                ))}
              </div>
              <div className="mb-[4px] ml-[280px] mt-auto h-[12px] w-[12px] rounded-full border border-[#e3906f] bg-[#b83200]" />
            </div>
          </div>
          <div className="mt-[2px] flex w-[9px] flex-col bg-[#dcdbdc]">
            <Step up />
            <div className="mt-[115px] h-[11px] border border-[#c9c8c8] bg-white" />
            <div className="flex-1" />
            <Step />
            <div className="flex h-[36px] flex-col items-center gap-[6px] bg-[#e8e7e8] pt-[3px] text-[#555]">
              <Svg className="h-[6px] w-[5px]" box="0 0 5 6"><path d="M0 3L2.500 0 5 3zM0 6l2.500-3L5 6z" fill="currentColor" stroke="none" /></Svg>
              <Svg className="h-[6px] w-[5px]" box="0 0 5 6"><path d="M0 0l2.500 3L5 0zM0 3l2.500 3L5 3z" fill="currentColor" stroke="none" /></Svg>
            </div>
          </div>
        </div>
        <div className="flex flex-1 items-center border-t border-[#c6c5c5] pl-[7px] text-[10px] text-[#666]"><Fit className="w-[77px]">Click to add notes</Fit></div>
      </div>
    </div>
  );
}

function PptStatus() {
  return (
    <div className="flex h-[15px] items-center border-t border-[#cfcecf] bg-[#f1f0f0] text-[7.500px] text-[#555]">
      <Fit className="ml-[5px] w-[46px]">Slide 17 of 39</Fit>
      <Svg className="ml-[12px] h-[8px] w-[9px]" box="0 0 9 8"><path d="M.5.500H4v7H.500zM4 .5h4v3M5 5l3 3M8 5L5 8" strokeWidth=".9" /></Svg>
      <Svg className="ml-[35px] h-[7px] w-[8px]" box="0 0 8 7"><path d="M0 3.500h8M0 6.500h8M2 1.500h4" /></Svg>
      <Fit className="ml-[3px] w-[20px]">Notes</Fit>
      <Svg className="ml-[13px] h-[7px] w-[8px]" box="0 0 8 7"><path d="M0 0h8v5H4L2.500 7V5H0z" fill="#666" stroke="none" /></Svg>
      <Fit className="ml-[3px] w-[35px]">Comments</Fit>
      <div className="ml-[14px] flex h-[14px] w-[25px] items-center justify-center bg-[#cac9c9]"><Svg className="h-[9px] w-[10px]" box="0 0 10 9"><path d="M.5.500h9v8h-9zM2.500.5v8M4.500 2.500h3v3h-3zM2.500 7h7" strokeWidth=".8" /></Svg></div>
      <Svg className="ml-[8px] h-[9px] w-[9px]" box="0 0 9 9"><path d="M.5.500h3v3h-3zM5.500.5h3v3h-3zM.5 5.500h3v3h-3zM5.500 5.500h3v3h-3z" strokeWidth=".9" /></Svg>
      <Svg className="ml-[16px] h-[8px] w-[9px]" box="0 0 9 8"><path d="M.5.500h8v7h-8zM4.500 0v8M2 2h1.500M2 4h1.500M5.500 2H7M5.500 4H7" strokeWidth=".9" /></Svg>
      <Svg className="ml-[16px] h-[9px] w-[9px]" box="0 0 9 9"><path d="M0 .5h9M1.500 1v3.500h6V1M4.500 5v3M2.500 8.500h4" strokeWidth=".9" /></Svg>
      <i className="ml-[11px] h-px w-[5px] bg-[#444]" />
      <div className="ml-[2px] flex h-[8px] w-[66px] items-center">
        <i className="h-px w-[11px] bg-[#aaa]" /><i className="h-[7px] w-[3px] bg-[#555]" /><i className="h-px w-[19px] bg-[#aaa]" /><i className="h-[5px] w-px bg-[#999]" /><i className="h-px flex-1 bg-[#aaa]" />
      </div>
      <Svg className="ml-[3px] h-[5px] w-[5px]" box="0 0 5 5"><path d="M0 2.500h5M2.500 0v5" /></Svg>
      <Fit className="ml-[10px] w-[14px]">40%</Fit>
      <Svg className="ml-[9px] h-[9px] w-[9px]" box="0 0 9 9"><path d="M.5.500h8v8h-8zM4.500 0v3M4.500 6v3M0 4.500h3M6 4.500h3M3 3h3v3H3z" strokeWidth=".7" /></Svg>
    </div>
  );
}

function Stage() {
  return (
    <main className="flex flex-1 flex-col bg-[#06172a] text-white">
      <div className="flex h-[52px] items-center pt-[3px]">
        <Svg className="ml-[16px] h-[16px] w-[22px]" box="0 0 22 16">
          <path d="M5 4L1.500 7.500 5 11" strokeWidth="1.500" />
          <circle cx="14" cy="5" r="3.900" strokeWidth="1.500" />
          <path d="M7.500 15c0-3.500 2.500-5.500 6.500-5.500s6.700 2 6.700 5.500z" strokeWidth="1.500" />
        </Svg>
        <Fit className="ml-[338px] w-[41px] text-[13.500px]">English</Fit>
        <i className="ml-[16px] h-[13px] w-px bg-[#4e5a66]" />
        <Svg className="ml-[14px] h-[18px] w-[18px]" box="0 0 18 18"><circle cx="9" cy="9" r="7.800" strokeWidth="1.300" /><circle cx="9" cy="9" r="4.300" fill="currentColor" stroke="none" /></Svg>
        <Svg className="ml-auto mr-[26px] h-[16px] w-[5px]" box="0 0 5 16"><path d="M2.500 2.500v0M2.500 8v0M2.500 13.500v0" strokeWidth="4" strokeLinecap="round" /></Svg>
      </div>
      <div className="flex h-[29px] items-start">
        <div className="ml-[15px] flex h-[22px] w-[145px] items-center rounded-full bg-[#00569e]">
          <span className="ml-[6px] flex h-[14px] w-[14px] items-center justify-center rounded-full bg-[#0b7f82]"><Mic className="h-[14px] w-[14px]" /></span>
          <Fit className="ml-[7px] w-[105px] text-[12.500px] font-semibold">HARRAG CHAIMAE</Fit>
        </div>
      </div>
      <div className="flex h-[480px]">
        <div className="ml-[196px] flex w-[450px] flex-col border border-[#8c8c90]">
          <div className="-mb-px -mt-px"><PptHeader /></div>
          <div className="mt-px"><Ribbon /></div>
          <PptBody />
          <PptStatus />
        </div>
        <Svg className="ml-[175px] mt-[4px] h-4 w-4"><path d="M1 5.500V1h4.500M10.500 1H15v4.500M15 10.500V15h-4.500M5.500 15H1v-4.500M1.500 1.500L6 6M14.500 1.500L10 6M14.500 14.500L10 10M1.500 14.500L6 10" strokeWidth="1.700" /></Svg>
      </div>
      <div className="flex h-[64px] items-center gap-[21px] pl-[337px]">
        <span className="flex h-[42px] w-[42px] items-center justify-center rounded-full border-[3px] border-white shadow-md"><Mic className="h-5 w-5" off /></span>
        <span className="flex h-[42px] w-[42px] items-center justify-center rounded-full bg-[#0f70d7] shadow-md">
          <Svg className="h-4 w-4"><path d="M1 3c-.5-1.700 2.500-3 3.500-1.500l1 2c.6 1-1.200 1.700-.8 2.500l5.300 5.300c.8.400 1.500-1.400 2.500-.8l2 1c1.500 1-.2 3.500-1.500 3.500C10 14.500 1.500 7 1 3z" strokeWidth="1.400" /></Svg>
        </span>
        <span className="flex h-[42px] w-[42px] items-center justify-center rounded-full border-[3px] border-white shadow-md">
          <Svg className="h-[16px] w-5" box="0 0 20 16"><path d="M1 3h12v10H1zM13 6.500L18.500 3v10L13 9.500M2.500 15.500L17 1" strokeWidth="1.500" /></Svg>
        </span>
      </div>
    </main>
  );
}

/* ---------- Taskbar ---------- */

function Slot({ children, className }: Kids) {
  return <div className={clsx("flex h-10 shrink-0 items-center justify-center", className)}>{children}</div>;
}

function Taskbar() {
  return (
    <footer className="flex h-10 bg-[linear-gradient(90deg,#1d1c1d_0,#241e1d_100px,#38251d_225px,#2b2422_320px,#23292b_400px,#26343a_560px,#202a2f_760px,#1d2225_100%)] text-[11.500px] text-white">
      <div className="flex w-[560px]">
        <Slot className="w-12"><Svg className="h-4 w-4"><path d="M0 2.300l6.800-1v6.200H0zM7.700 1.200L16 0v7.500H7.700zM0 8.500h6.800v6.200L0 13.700zM7.700 8.500H16V16l-8.300-1.200z" fill="#fff" stroke="none" /></Svg></Slot>
        <Slot className="w-12"><Svg className="h-[17px] w-[17px]" box="0 0 17 17"><circle cx="10.500" cy="6.500" r="5.500" strokeWidth="1.400" /><path d="M6.500 10.500L.8 16.200" strokeWidth="1.400" /></Svg></Slot>
        <Slot className="w-12"><Svg className="h-4 w-4"><path d="M.5 0v3h10V0M.5 16v-3h10v3M.5 5.500h10v5H.500zM14 0v3M14 8v8" strokeWidth="1.200" /><path d="M14 4v3" strokeWidth="2.500" /></Svg></Slot>
        <Slot className="ml-[2px] w-12">
          <Svg className="h-6 w-[24px]" box="0 0 24 24"><path d="M8 7V4c0-3 7-3 7 0v3M10 6V4c0-2 6-2 6 1v2" strokeWidth="1.200" /><path d="M.5 6.500h23V22L21 23H3L.500 22z" fill="#fff" stroke="none" /><path d="M6.500 9.500h5v5h-5z" fill="#f25022" stroke="none" /><path d="M12.500 9.500h5v5h-5z" fill="#7fba00" stroke="none" /><path d="M6.500 15.500h5v5h-5z" fill="#00a4ef" stroke="none" /><path d="M12.500 15.500h5v5h-5z" fill="#ffb900" stroke="none" /></Svg>
        </Slot>
        <Slot className="ml-[6px] w-10 flex-col">
          <Svg className="mt-auto h-[20px] w-[22px]" box="0 0 22 20"><path d="M0 1h9l1 2h12v15H0z" fill="#ffd567" stroke="none" /><path d="M0 1h9l1 2H0z" fill="#e09f12" stroke="none" /><path d="M4 10h14v9h-4v-4H8v4H4z" fill="#3e96dd" stroke="none" /></Svg>
          <span className="mt-[8px] flex h-[2px] w-10"><i className="w-8 bg-[#76b9ed]" /><i className="w-2 bg-[#4f7fa5]" /></span>
        </Slot>
        <Slot className="ml-[5px] w-12"><Svg className="h-5 w-6" box="0 0 24 20"><path d="M0 7l12-7 12 7v13H0z" fill="#fff" stroke="none" /><path d="M2 7.500h20L14 13l4 4-7-3z" fill="#2b211e" stroke="none" /></Svg></Slot>
        <Slot className="ml-[1px] w-12">
          <Svg className="h-6 w-6" box="0 0 24 24">
            <defs><linearGradient id="edgeTop"><stop stopColor="#1a9ee8" /><stop offset="1" stopColor="#5edb6b" /></linearGradient></defs>
            <path d="M0 11C1 4 6 0 12 0c7 0 12 5 12 10 0 4-3 6-7 6-3 0-3-1.500-2-3C16 9 12 6 8 6 4 6 1 8 0 11z" fill="url(#edgeTop)" stroke="none" />
            <path d="M0 12c0-4 3.500-7 8-7 4 0 6 2 6 4-5 1-7 5-4 9 2.500 3.500 7 3.500 11 1-2 3-5 5-9 5C5 24 0 18.500 0 12z" fill="#1473cf" stroke="none" />
            <path d="M8 11c-3 3-2 9 2 12 4 1.500 8 0 11-4-5 2-10 1-11-4-.4-2 .5-4 1.500-5z" fill="#0c4fa0" stroke="none" />
          </Svg>
        </Slot>
        <Slot className="ml-px w-[48px] border-b-2 border-[#76b9ed] bg-[#545454] pt-[2px]">
          <Svg className="h-[21px] w-[21px]" box="0 0 22 22">
            <circle cx="11" cy="11" r="11" fill="#fbc116" stroke="none" />
            <path d="M1.500 5.500A11 11 0 0 1 20.500 5.500H11L6 13z" fill="#e33b2e" stroke="none" />
            <path d="M1.500 5.500A11 11 0 0 0 11 22l4.800-8.200H6.300z" fill="#259b4c" stroke="none" />
            <circle cx="11" cy="11" r="5.200" fill="#fff" stroke="none" /><circle cx="11" cy="11" r="4.100" fill="#4285f4" stroke="none" />
          </Svg>
        </Slot>
        <Slot className="ml-[5px] w-10 flex-col">
          <span className="mt-auto flex h-[21px] w-[21px] items-center justify-center rounded-[4px] bg-[#b30b00]"><Svg className="h-[14px] w-[14px]" box="0 0 14 14"><path d="M7 1c-2.500 0 2 9 5.500 9 1.500-2-7-3-11 1.500-.5 2 3 1 5-5.500C7.500 3 7.800 1 7 1z" strokeWidth="1.200" /></Svg></span>
          <span className="mt-[7px] flex h-[2px] w-10"><i className="w-8 bg-[#76b9ed]" /><i className="w-2 bg-[#4f7fa5]" /></span>
        </Slot>
        <Slot className="ml-[9px] w-10 border-b-2 border-[#76b9ed] pt-px">
          <Svg className="h-[19px] w-[19px]" box="0 0 20 20"><circle cx="10" cy="10" r="5.200" strokeWidth="2.800" /><path d="M10 0v4M10 16v4M0 10h4M16 10h4M2.900 2.900l2.900 2.900M14.200 14.200l2.900 2.900M17.100 2.900l-2.900 2.900M5.800 14.200l-2.900 2.900" strokeWidth="2.800" /></Svg>
        </Slot>
        <Slot className="ml-[9px] w-10 border-b-2 border-[#76b9ed] pr-[2px] pt-px">
          <Svg className="h-6 w-[22px]" box="0 0 22 24"><path d="M1 2h18v22H1z" fill="#f7fbe8" stroke="#999" /><path d="M1.500 12h17v11.500h-17z" fill="#8ccb2c" stroke="none" /><path d="M4 2V0M7 2V0M10 2V0M13 2V0M16 2V0" stroke="#ccc" /><path d="M5.500 14V7M8 7v6M9 11l1.500-2M11 11h3" stroke="#222" strokeWidth="1.300" /><path d="M20.500 1l-6 12" stroke="#e8a33a" strokeWidth="2.300" /><path d="M21.200.3l-1 2" stroke="#cf4b3b" strokeWidth="2.300" /></Svg>
        </Slot>
      </div>
      <div className="ml-auto flex items-center">
        <Svg className="h-[7px] w-[12px]" box="0 0 12 7"><path d="M1 6.500l5-5 5 5" strokeWidth="1.200" /></Svg>
        <Svg className="ml-[9px] h-4 w-4"><path d="M.5 5.500H3L7 2v12l-4-3.500H.500z" /><path d="M9 6c1 1.300 1 2.700 0 4M11 4c2 2.500 2 5.500 0 8M13 2.500c3 3.500 3 7.500 0 11" /></Svg>
        <Svg className="ml-[11px] h-[14px] w-[14px]" box="0 0 14 14"><path d="M1.500 13.500C1.500 7 6 1.500 13 1.500M4.500 13.500C4.500 9 8 5 13 5M7.500 13.500C7.500 11 10 8.500 13 8.500M10.500 13.500c0-1 1-2 2.500-2" strokeWidth="1.200" /></Svg>
        <Svg className="ml-[7px] h-[14px] w-[18px]" box="0 0 18 14"><path d="M5.500 3.500h11v7h-9M17.500 5.500v3M1 2.500h5v3c0 3-5 3-5 0zM2.300 2.500V0M4.700 2.500V0M3.500 8v3.500" /><path d="M7.500 5.500h7v3.500h-7z" fill="currentColor" stroke="none" /></Svg>
        <Svg className="ml-[7px] h-[13px] w-[22px]" box="0 0 22 13"><path d="M.5.500h21v12H.500z" /><path d="M3 3.500h16M3 6.500h16" strokeDasharray="1.500 1.200" strokeWidth="1.400" /><path d="M3 9.500h2M7 9.500h8M17 9.500h2" strokeWidth="1.400" /></Svg>
        <Fit className="ml-[14px] w-[18px] text-[11.500px]">ESP</Fit>
        <div className="ml-[13px] flex w-[58px] flex-col items-center pb-[2px] leading-[17px]"><Fit className="w-[42px]">3:01 PM</Fit><Fit className="w-[58px]">11/11/2020</Fit></div>
        <Svg className="ml-[15px] mr-[25px] h-[16px] w-4"><path d="M0 0h16v12.500h-5L8 16v-3.500H0z" fill="#fff" stroke="none" /><path d="M3 3.500h10M3 6h10M3 8.500h7" stroke="#20272b" /></Svg>
      </div>
    </footer>
  );
}

export default function App() {
  return (
    <div className="flex h-[765px] w-[1366px] flex-col overflow-hidden bg-white font-['Noto_Sans',sans-serif]">
      <TabStrip />
      <AddressBar />
      <Bookmarks />
      <div className="flex h-[625px]">
        <Sidebar />
        <Notes />
        <Stage />
      </div>
      <Taskbar />
    </div>
  );
}
